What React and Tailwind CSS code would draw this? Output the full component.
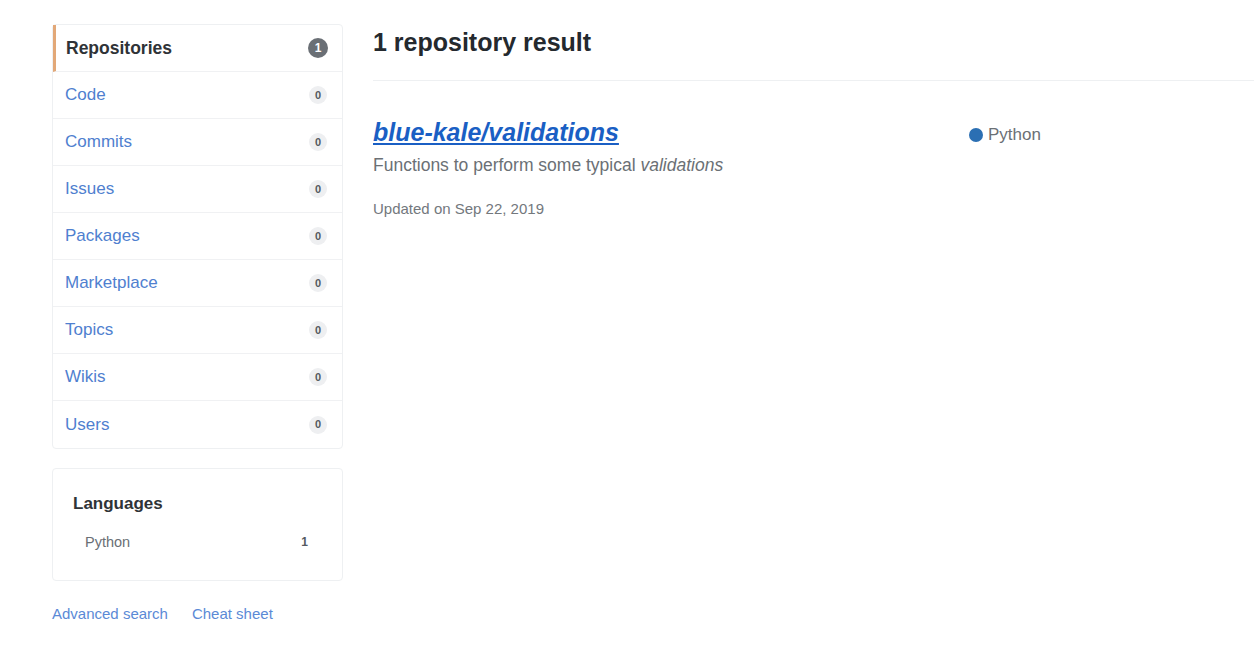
import React from 'react';

const items = [
  ['Code', 0],
  ['Commits', 0],
  ['Issues', 0],
  ['Packages', 0],
  ['Marketplace', 0],
  ['Topics', 0],
  ['Wikis', 0],
  ['Users', 0],
];

export default function App() {
  return (
    <div className="w-[1254px] h-[660px] bg-white overflow-hidden font-['Liberation_Sans',Arial,sans-serif] flex">
      {/* Sidebar */}
      <aside className="w-[291px] ml-[52px] mt-[24px] shrink-0">
        <nav className="border border-[#eef0f2] rounded-sm">
          <div className="h-[47px] flex items-center justify-between pl-[10px] pr-[14px] border-l-[3px] border-[#e2a878] border-b border-b-[#f0f1f3]">
            <span className="text-[17.5px] font-bold text-[#2f3337]">Repositories</span>
            <span className="w-[20px] h-[20px] rounded-full bg-[#6a6f75] text-white text-[12px] font-bold flex items-center justify-center">1</span>
          </div>
          {items.map(([name, n], i) => (
            <div
              key={name}
              className={`h-[47px] flex items-center justify-between pl-[12px] pr-[15px] ${i < items.length - 1 ? 'border-b border-[#f0f1f3]' : ''}`}
            >
              <span className="text-[17px] text-[#4f80cf]">{name}</span>
              <span className="w-[18px] h-[18px] rounded-full bg-[#eeeff1] text-[#555a60] text-[11px] font-bold flex items-center justify-center">{n}</span>
            </div>
          ))}
        </nav>

        <div className="mt-[19px] border border-[#eef0f2] rounded-sm h-[113px] px-[20px] pt-[22px]">
          <h3 className="text-[17px] font-bold text-[#2f3337]">Languages</h3>
          <div className="mt-[15px] flex items-center justify-between pl-[12px] pr-[14px]">
            <span className="text-[14.5px] text-[#6a6f75]">Python</span>
            <span className="text-[12px] font-bold text-[#555a60]">1</span>
          </div>
        </div>

        <div className="mt-[22px] flex gap-[24px] text-[15px] text-[#5b8ad6]">
          <a>Advanced search</a>
          <a>Cheat sheet</a>
        </div>
      </aside>

      {/* Main */}
      <main className="flex-1 ml-[30px] mt-[27px]">
        <h2 className="text-[25px] font-bold text-[#24292e] leading-[30px]">1 repository result</h2>
        <div className="mt-[23px] border-t border-[#eef0f2]" />

        <div className="mt-[36px] flex">
          <div className="w-[596px]">
            <a className="text-[25px] font-bold italic underline text-[#1a5fc4] leading-[30px]">blue-kale/validations</a>
            <p className="mt-[4px] text-[17.5px] text-[#6b7075]">
              Functions to perform some typical <em>validations</em>
            </p>
            <p className="mt-[20px] text-[15px] text-[#73787d]">Updated on Sep 22, 2019</p>
          </div>
          <div className="mt-[3px] flex items-center gap-[5px] h-[30px] text-[17px] text-[#6b7075]">
            <span className="w-[14px] h-[14px] rounded-full bg-[#2b6fb3]" />
            Python
          </div>
        </div>
      </main>
    </div>
  );
}
